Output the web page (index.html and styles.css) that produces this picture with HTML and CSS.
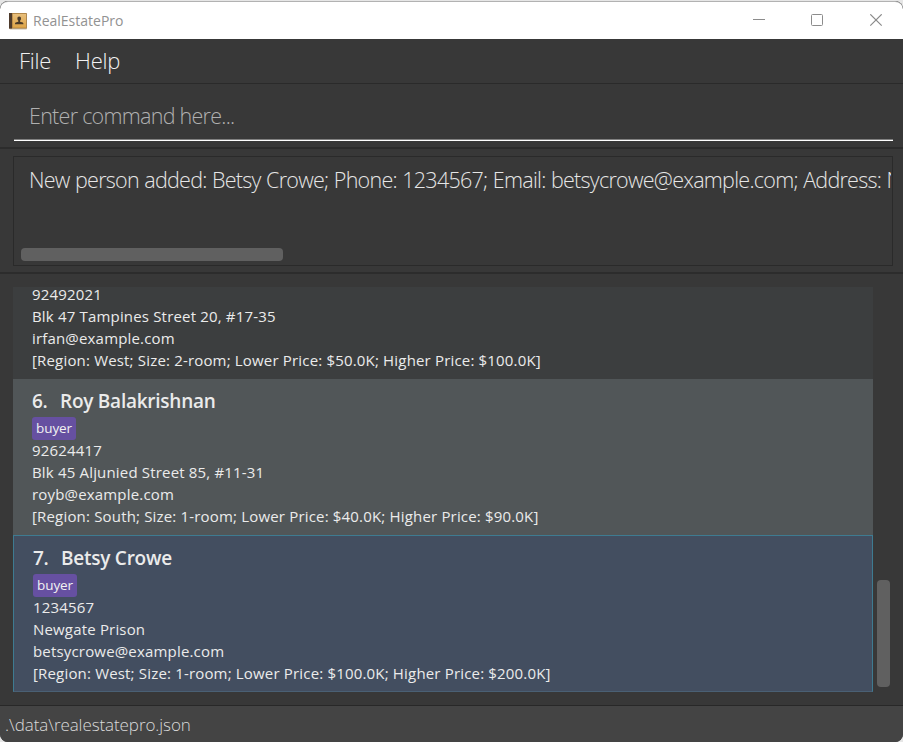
FILE: index.html
```html
<!DOCTYPE html>
<html lang="en">
<head>
<meta charset="utf-8">
<title>RealEstatePro</title>
<link rel="stylesheet" href="styles.css">
</head>
<body>
<div class="window">
  <header class="titlebar">
    <svg class="app-icon" width="20" height="18" viewBox="0 0 20 18">
      <defs><linearGradient id="cover" x1="0" y1="0" x2="0" y2="1"><stop offset="0" stop-color="#e8bf7c"/><stop offset="1" stop-color="#dda447"/></linearGradient></defs>
      <rect x="1.500" y="1.500" width="17.500" height="16" rx="1" fill="#c9c0b0"/>
      <rect x="1" y="1" width="17.800" height="15.500" rx=".6" fill="#a67a3c"/>
      <rect x="4.600" y="1.800" width="13.400" height="13.900" fill="url(#cover)"/>
      <rect x="1" y="1" width="3" height="15.500" fill="#4d3a2b"/>
      <path d="M11.200 4.600c1.200 0 1.900.9 1.800 2.100-.1 1-.5 1.500-.9 2v1l2.600.8c.5.200.7.700.7 1.700H7c0-1 .2-1.500.7-1.700l2.600-.8v-1c-.4-.5-.8-1-.9-2-.1-1.200.6-2.100 1.800-2.100z" fill="#4a3a28"/>
    </svg>
    <span class="title">RealEstatePro</span>
    <svg class="controls" width="132" height="14" viewBox="0 0 132 14" fill="none" stroke="#8c8c8c">
      <path d="M0 5.500h12"/>
      <rect x="58.500" y="0.500" width="11" height="11" rx="1"/>
      <path d="M117.300 .3l11.400 11.400M128.700 .3l-11.400 11.400" stroke-width="1.200"/>
    </svg>
  </header>
  <nav class="menu"><span class="file">File</span><span class="help">Help</span></nav>
  <section class="command"><div class="field">Enter command here...</div></section>
  <section class="result">
    <div class="result-box">
      <div class="message">New person added: Betsy Crowe; Phone: 1234567; Email: betsycrowe@example.com; Address: Newgate Prison</div>
      <div class="h-thumb"></div>
    </div>
  </section>
  <main class="people">
    <div class="list">
      <article class="card first">
        <p class="edge">92492021</p>
        <p>Blk 47 Tampines Street 20, #17-35</p>
        <p>irfan@example.com</p>
        <p>[Region: West; Size: 2-room; Lower Price: $50.0K; Higher Price: $100.0K]</p>
      </article>
      <article class="card alt">
        <h2><span class="num">6.</span><span>Roy Balakrishnan</span></h2>
        <span class="tag">buyer</span>
        <p>92624417</p>
        <p>Blk 45 Aljunied Street 85, #11-31</p>
        <p>royb@example.com</p>
        <p>[Region: South; Size: 1-room; Lower Price: $40.0K; Higher Price: $90.0K]</p>
      </article>
      <article class="card selected">
        <h2><span class="num">7.</span><span>Betsy Crowe</span></h2>
        <span class="tag">buyer</span>
        <p>1234567</p>
        <p>Newgate Prison</p>
        <p>betsycrowe@example.com</p>
        <p>[Region: West; Size: 1-room; Lower Price: $100.0K; Higher Price: $200.0K]</p>
      </article>
    </div>
    <div class="v-track"><div class="v-thumb"></div></div>
  </main>
  <footer class="status">.\data\realestatepro.json</footer>
</div>
</body>
</html>
```
FILE: styles.css
```css
* { box-sizing: border-box; }
body {
  margin: 0;
  padding-top: 1px;
  height: 742px;
  overflow: hidden;
  background: #e6e6e6;
  font-family: "Open Sans", "Noto Sans", sans-serif;
  white-space: nowrap;
}
.window {
  display: flex;
  flex-direction: column;
  height: 741px;
  border-radius: 8px;
  overflow: hidden;
  background: #383838;
}
.titlebar {
  display: flex;
  align-items: center;
  height: 38px;
  padding: 0 18px 0 8px;
  background: #fff;
  border-top: 1px solid #b2b2b2;
  border-radius: 8px 8px 0 0;
}
.title {
  flex: 1;
  margin-left: 5px;
  font-size: 14px;
  font-weight: 400;
  color: #929292;
}
.menu {
  display: flex;
  height: 45px;
  padding: 0 19px;
  line-height: 43px;
  font-size: 22px;
  font-weight: 300;
  letter-spacing: -0.25px;
  color: #f2f2f2;
  border-bottom: 1px solid #2a2a2a;
}
.help { margin-left: 24px; }
.command {
  height: 65px;
  padding: 8px 10px 0 14px;
  border-bottom: 2px solid #2c2c2c;
}
.field {
  height: 49px;
  padding-left: 15px;
  line-height: 48px;
  font-size: 21.500px;
  font-weight: 300;
  letter-spacing: -0.73px;
  color: #b0b0b0;
  border-bottom: 1px solid #fff;
  box-shadow: inset 0 -1px #808080;
}
.result {
  height: 125px;
  padding: 7px 10px 0 13px;
  border-bottom: 2px solid #2c2c2c;
}
.result-box {
  height: 110px;
  border: 1px solid #2a2a2a;
  padding: 0 1px 0 7px;
}
.message {
  height: 91px;
  padding-left: 8px;
  overflow: hidden;
  line-height: 46px;
  font-size: 21.500px;
  font-weight: 300;
  letter-spacing: -0.73px;
  word-spacing: 0.5px;
  color: #e6e6e6;
}
.h-thumb {
  width: 262px;
  height: 13px;
  border-radius: 4px;
  background: #606060;
}
.people {
  display: flex;
  height: 431px;
  padding: 13px;
}
.list {
  width: 860px;
  height: 405px;
  overflow: hidden;
}
.card {
  padding: 8px 19px 0;
  background: #3c3e3f;
  color: #ebebeb;
}
.card.first { height: 92px; padding-top: 0; }
.card.alt { height: 156px; background: #515658; }
.card.selected {
  height: 157px;
  background: #434e60;
  border: 1px solid #3e7b91;
  border-bottom-color: #4a6074;
}
.card p {
  margin: 0;
  height: 22px;
  line-height: 22px;
  font-size: 15px;
  letter-spacing: 0.175px;
}
.card p.edge { height: 18px; line-height: 14px; }
.card h2 {
  display: flex;
  margin: 0 0 2px;
  height: 28px;
  line-height: 28px;
  font-size: 19px;
  font-weight: 600;
  letter-spacing: -0.25px;
}
.num { width: 28px; }
.tag {
  display: block;
  width: 44px;
  height: 23px;
  margin-bottom: -1px;
  line-height: 22px;
  border-radius: 3px;
  background: #6650a1;
  color: #f2f2f2;
  font-size: 13.500px;
  font-weight: 500;
  letter-spacing: -0.1px;
  text-align: center;
}
.v-track { padding: 293px 0 0 4px; }
.v-thumb {
  width: 13px;
  height: 107px;
  border-radius: 4px;
  background: #606060;
}
.status {
  height: 37px;
  padding-left: 5px;
  line-height: 37px;
  font-size: 17px;
  font-weight: 300;
  letter-spacing: -0.08px;
  color: #dadada;
  background: #444;
  border-top: 1px solid #282828;
}
```
